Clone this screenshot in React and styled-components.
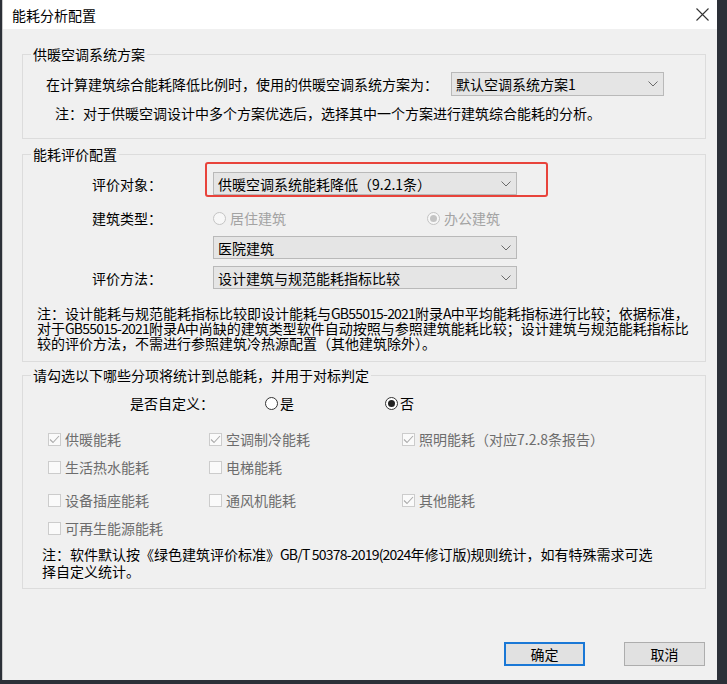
import React from 'react';
import styled, {createGlobalStyle} from 'styled-components';

const GlobalStyle = createGlobalStyle`
  html, body {
    margin: 0;
    padding: 0;
    background: #2c3038;
  }
  body {
    font-family: "Noto Sans CJK SC", "Microsoft YaHei", sans-serif;
    font-size: 14px;
    color: #000;
  }
`

const Desktop = styled.div`
  width: 727px;
  height: 684px;
  box-sizing: border-box;
  padding-left: 2px;
  background: #2c3038;
  overflow: hidden;
`

const Window = styled.div`
  width: 715px;
  height: 680px;
  box-sizing: border-box;
  border-left: 1px solid #c9c9c9;
  background: #f0f0f0;
  display: flex;
  flex-direction: column;
`

const TitleBar = styled.div`
  height: 29px;
  flex: none;
  background: #fff;
  display: flex;
  align-items: center;
  justify-content: space-between;
  padding: 0 8px 0 9px;
  line-height: 16px;
`

const Body = styled.div`
  flex: 1;
  padding: 17px 11px 0 19px;
  display: flex;
  flex-direction: column;
`

const Group = styled.fieldset`
  margin: ${p => p.$mt || 0}px 0 0;
  padding: 0 0 ${p => p.$pb}px;
  border: 1px solid #dcdcdc;
  min-width: 0;
`

const Legend = styled.legend`
  margin-left: 8px;
  padding: 0 2px;
  line-height: 16px;
`

const PlanRow = styled.div`
  display: grid;
  grid-template-columns: 405px 213px;
  align-items: center;
  margin-top: 10px;
  padding-left: 23px;
`

const Note = styled.div`
  margin-top: ${p => p.$mt}px;
  padding-left: ${p => p.$pl}px;
  line-height: ${p => p.$lh}px;
  white-space: nowrap;
`

// latin runs in the notes are drawn narrower in the original dialog
const Latin = styled.span`
  letter-spacing: -0.8px;
`

const FormRow = styled.div`
  position: relative;
  display: grid;
  grid-template-columns: 121px 304px;
  align-items: center;
  height: ${p => p.$h}px;
  margin-top: ${p => p.$mt}px;
  padding-left: 69px;
`

const Annotation = styled.div`
  position: absolute;
  left: 182px;
  top: -10px;
  width: 343px;
  height: 35px;
  box-sizing: border-box;
  border: 2px solid #e8433b;
  border-radius: 3px;
  pointer-events: none;
`

const SelectBox = styled.div`
  box-sizing: border-box;
  width: ${p => p.$w}px;
  height: ${p => p.$h || 23}px;
  border: 1px solid #b9b9b9;
  background: #e5e5e5;
  display: flex;
  align-items: center;
  justify-content: space-between;
  padding: 0 5px 0 4px;
  white-space: nowrap;
  grid-column: ${p => p.$col || 'auto'};
`

const RadioLine = styled.div`
  display: grid;
  grid-template-columns: ${p => p.$cols};
  align-items: center;
`

const Choice = styled.span`
  display: inline-flex;
  align-items: center;
  gap: ${p => p.$gap || 4}px;
  color: ${p => p.$color || '#000'};
  white-space: nowrap;
`

const RadioCircle = styled.span`
  width: 13px;
  height: 13px;
  box-sizing: border-box;
  border-radius: 50%;
  border: 1px solid ${p => (p.$disabled ? '#c4c4c4' : '#333')};
  background: ${p => (p.$disabled ? '#f7f7f7' : '#fff')};
  display: inline-flex;
  align-items: center;
  justify-content: center;
  flex: none;

  &::after {
    content: '';
    display: ${p => (p.$checked ? 'block' : 'none')};
    width: 7px;
    height: 7px;
    border-radius: 50%;
    background: ${p => (p.$disabled ? '#c4c4c4' : '#222')};
  }
`

const CustomRow = styled.div`
  display: grid;
  grid-template-columns: 135px 120px auto;
  align-items: center;
  height: 20px;
  margin-top: 10px;
  padding-left: 107px;
`

const CheckRow = styled.div`
  display: grid;
  grid-template-columns: 161px 193px auto;
  align-items: center;
  height: 20px;
  margin-top: ${p => p.$mt}px;
  padding-left: 25px;
`

const Box = styled.span`
  width: 13px;
  height: 13px;
  box-sizing: border-box;
  border: 1px solid #cccccc;
  background: #fafafa;
  display: inline-flex;
  align-items: center;
  justify-content: center;
  flex: none;
`

const Footer = styled.div`
  display: flex;
  justify-content: flex-end;
  gap: 39px;
  margin-top: 53px;
  padding-right: 1px;
`

const Button = styled.div`
  width: 81px;
  height: 24px;
  box-sizing: border-box;
  border: ${p => (p.$primary ? '2px solid #1a78d6' : '1px solid #adadad')};
  background: #e1e1e1;
  display: flex;
  align-items: center;
  justify-content: center;
  line-height: 16px;
`

const Chevron = () => (
    <svg width="10" height="6" viewBox="0 0 10 6">
        <path d="M0.5 0.5 L5 5 L9.5 0.5" fill="none" stroke="#6a6a6a" strokeWidth="1"/>
    </svg>
)

const CloseIcon = () => (
    <svg width="13" height="13" viewBox="0 0 13 13">
        <path d="M0.5 0.5 L12.5 12.5 M12.5 0.5 L0.5 12.5" stroke="#333" strokeWidth="1.1"/>
    </svg>
)

const Select = ({children, ...rest}) => (
    <SelectBox {...rest}>
        <span>{children}</span>
        <Chevron/>
    </SelectBox>
)

const Radio = ({label, checked, disabled}) => (
    <Choice $color={disabled ? '#a3a3a3' : '#000'} $gap={disabled ? 4 : 2}>
        <RadioCircle $checked={checked} $disabled={disabled}/>
        {label}
    </Choice>
)

const Check = ({label, checked}) => (
    <Choice $color="#6d6d6d">
        <Box>
            {checked && (
                <svg width="11" height="9" viewBox="0 0 11 9">
                    <path d="M1 4.5 L4 7.5 L10 1" fill="none" stroke="#ababab" strokeWidth="1.1"/>
                </svg>
            )}
        </Box>
        {label}
    </Choice>
)

export default function App() {
    return (
        <Desktop>
            <GlobalStyle/>
            <Window>
                <TitleBar>
                    <span>能耗分析配置</span>
                    <CloseIcon/>
                </TitleBar>
                <Body>
                    <Group $pb={17}>
                        <Legend>供暖空调系统方案</Legend>
                        <PlanRow>
                            <span>在计算建筑综合能耗降低比例时，使用的供暖空调系统方案为：</span>
                            <Select $w={213} $h={24}>默认空调系统方案1</Select>
                        </PlanRow>
                        <Note $mt={9} $pl={32} $lh={16}>
                            注：对于供暖空调设计中多个方案优选后，选择其中一个方案进行建筑综合能耗的分析。
                        </Note>
                    </Group>

                    <Group $mt={7} $pb={10}>
                        <Legend>能耗评价配置</Legend>
                        <FormRow $h={23} $mt={10}>
                            <span>评价对象：</span>
                            <Select $w={304}>供暖空调系统能耗降低（9.2.1条）</Select>
                            <Annotation/>
                        </FormRow>
                        <FormRow $h={20} $mt={13}>
                            <span>建筑类型：</span>
                            <RadioLine $cols="214px auto">
                                <Radio label="居住建筑" disabled/>
                                <Radio label="办公建筑" disabled checked/>
                            </RadioLine>
                        </FormRow>
                        <FormRow $h={23} $mt={8}>
                            <Select $w={304} $col="2">医院建筑</Select>
                        </FormRow>
                        <FormRow $h={23} $mt={7}>
                            <span>评价方法：</span>
                            <Select $w={304}>设计建筑与规范能耗指标比较</Select>
                        </FormRow>
                        <Note $mt={17} $pl={14} $lh={15}>
                            <div>注：设计能耗与规范能耗指标比较即设计能耗与<Latin>GB55015-2021</Latin>附录<Latin>A</Latin>中平均能耗指标进行比较；依据标准，</div>
                            <div>对于<Latin>GB55015-2021</Latin>附录<Latin>A</Latin>中尚缺的建筑类型软件自动按照与参照建筑能耗比较；设计建筑与规范能耗指标比</div>
                            <div>较的评价方法，不需进行参照建筑冷热源配置（其他建筑除外）。</div>
                        </Note>
                    </Group>

                    <Group $mt={5} $pb={8}>
                        <Legend>请勾选以下哪些分项将统计到总能耗，并用于对标判定</Legend>
                        <CustomRow>
                            <span>是否自定义：</span>
                            <Radio label="是"/>
                            <Radio label="否" checked/>
                        </CustomRow>
                        <CheckRow $mt={16}>
                            <Check label="供暖能耗" checked/>
                            <Check label="空调制冷能耗" checked/>
                            <Check label="照明能耗（对应7.2.8条报告）" checked/>
                        </CheckRow>
                        <CheckRow $mt={8}>
                            <Check label="生活热水能耗"/>
                            <Check label="电梯能耗"/>
                        </CheckRow>
                        <CheckRow $mt={13}>
                            <Check label="设备插座能耗"/>
                            <Check label="通风机能耗"/>
                            <Check label="其他能耗" checked/>
                        </CheckRow>
                        <CheckRow $mt={8}>
                            <Check label="可再生能源能耗"/>
                        </CheckRow>
                        <Note $mt={8} $pl={19} $lh={17}>
                            <div>注：软件默认按《绿色建筑评价标准》<Latin>GB/T 50378-2019(2024</Latin>年修订版<Latin>)</Latin>规则统计，如有特殊需求可选</div>
                            <div>择自定义统计。</div>
                        </Note>
                    </Group>

                    <Footer>
                        <Button $primary>确定</Button>
                        <Button>取消</Button>
                    </Footer>
                </Body>
            </Window>
        </Desktop>
    );
}
